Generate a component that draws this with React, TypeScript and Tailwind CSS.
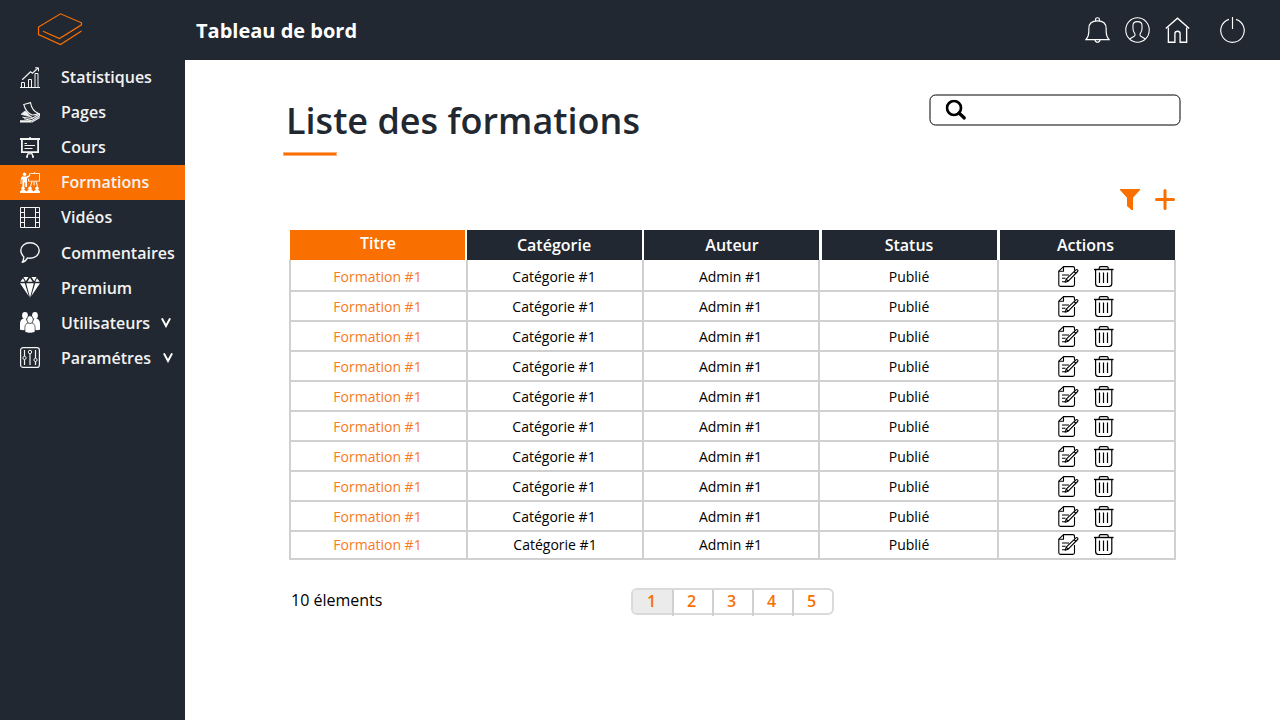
import type { ReactNode } from "react";

const W = "#f4f4f4";

function StatsIcon() {
  return (
    <svg width="20" height="21" viewBox="0 0 20 21" fill="none" stroke={W}>
      <path d="M0 20.5h20" strokeWidth="1" />
      <path d="M1.500 20v-4.500h3V20M8.500 20v-7.500h3V20M15 20V6.500h3V20" strokeWidth="1" />
      <path d="M2.200 12.800L10.500 4.800l2 1.500L18 1" strokeWidth="1.200" />
      <path d="M15 .8h3.500v3.500" strokeWidth="1" />
    </svg>
  );
}

function PagesIcon() {
  return (
    <svg width="20" height="21" viewBox="0 0 20 21" fill="none" stroke={W}>
      <path d="M3.800 2.500L10.500.6c.8 4.800 3 9 8 10.900-2 1-4 1.500-6.300 1.500C8 11.500 5 7 3.800 2.500z" strokeWidth="1.100" />
      <path d="M4.500 9.300L1 12.300l4.500 1.200 7 2-3.500-2.500-3-3.700z" fill={W} strokeWidth=".6" />
      <path d="M2.500 15.300l9.500 1.200 7.500-4.500v1.800l-7.500 4.700-8-1.700M12 20l7.700-4.500" strokeWidth="1.100" />
      <path d="M0 18.300h11l1 2.300H0z" fill={W} stroke="none" />
    </svg>
  );
}

function CoursIcon() {
  return (
    <svg width="20" height="21" viewBox="0 0 20 21" fill="none" stroke={W}>
      <path d="M10 0v1.500" strokeWidth="1.500" />
      <path d="M0 2h20" strokeWidth="2" />
      <path d="M1.900 3v12.200h16.200V3" strokeWidth="1.800" />
      <path d="M4.500 6.500H7M4.500 8.500h10.500M4.500 11.500h8" strokeWidth="1.200" />
      <path d="M8.500 16l-2 4.200M11.500 16l2 4.200M10 16v1.500M6 20h2M12 20h2" strokeWidth="1.500" />
    </svg>
  );
}

function FormationsIcon() {
  return (
    <svg width="20" height="21" viewBox="0 0 20 21" fill="none" stroke="#fff">
      <circle cx="4.500" cy="2.300" r="1.700" fill="#fff" stroke="none" />
      <path d="M1 5.500L2 4.500h4.500L10 2.800l.4.900L7 6.300V15H5.300v-4.500h-1V15H2.400V6.800L1.400 8v4H.5z" fill="#fff" stroke="none" />
      <path d="M9.500 3V1.500h10v7.700h-11V6.500M14.500 0v1.500" strokeWidth=".8" />
      <path d="M12 9.500l-1.500 5M16 9.500l1.500 5M14 9.500v4" strokeWidth="1" />
      <g fill="#fff" stroke="none">
        <circle cx="3" cy="16.200" r="1.700" />
        <circle cx="10" cy="16.200" r="1.700" />
        <circle cx="17" cy="16.200" r="1.700" />
        <path d="M0 21v-1.500l2-2h2l2.500 2 2-2h3l2 2 2.500-2h2l2 2V21z" />
      </g>
    </svg>
  );
}

function VideosIcon() {
  return (
    <svg width="20" height="21" viewBox="0 0 20 21" fill="none" stroke={W} strokeWidth="1">
      <path d="M.5.5h19v20H.5zM4.500.5v20M15.500.5v20M4.500 10.500h11" />
      <path d="M.5 5.500h4M.5 10.500h4M.5 15.500h4M15.500 5.500h4M15.500 10.500h4M15.500 15.500h4" />
    </svg>
  );
}

function CommentIcon() {
  return (
    <svg width="20" height="21" viewBox="0 0 20 21" fill="none" stroke={W} strokeWidth="1.400" strokeLinejoin="round">
      <path d="M10 .8c5.200 0 9.200 3.200 9.200 7.700s-4 7.700-9.200 7.700c-1 0-1.700-.1-2.500-.3-1.200 2.300-3 3.900-5.300 4.400 1-1.500 1.700-3 1.600-5.600C1.900 13.100.8 11 .8 8.500.8 4 4.800.8 10 .8z" />
    </svg>
  );
}

function PremiumIcon() {
  return (
    <svg width="20" height="21" viewBox="0 0 20 21" fill="#fff">
      <path d="M3.500 0h5L5.800 4.300 4.300 1.500zM16.500 0h-5l2.700 4.300 1.500-2.800zM10 .8l2.600 4H7.400zM3 1.200l1.800 3.600H.3zM17 1.200l-1.800 3.600h4.500z" />
      <path d="M0 6.200h4.800l4 13zM20 6.200h-4.800l-4 13zM6.200 6.200h7.600L10 20.800z" />
    </svg>
  );
}

function UsersIcon() {
  return (
    <svg width="20" height="21" viewBox="0 0 20 21" fill="#fff">
      <ellipse cx="5" cy="3.500" rx="2.900" ry="3.400" />
      <ellipse cx="15" cy="3.500" rx="2.900" ry="3.400" />
      <path d="M0 17.500v-6C0 8.500 1.800 6.800 3.500 6.500l2.300.3L8 11l-2.300 7C2.500 18.300.5 18.200 0 17.500zM20 17.500v-6c0-3-1.800-4.700-3.500-5l-2.300.3L12 11l2.300 7c3.200.3 5.200.2 5.700-.5z" />
      <g stroke="#222831" strokeWidth=".7">
        <path d="M4.900 19.600v-4c0-2.800 1.700-4.500 3.300-4.700h3.600c1.600.2 3.300 1.900 3.300 4.700v4c-1.600 2-8.600 2-10.200 0z" />
        <ellipse cx="10" cy="7.600" rx="3.200" ry="3.900" />
      </g>
    </svg>
  );
}

function SettingsIcon() {
  return (
    <svg width="20" height="21" viewBox="0 0 20 21" fill="none" stroke={W} strokeWidth="1">
      <rect x=".6" y=".6" width="18.800" height="19.800" rx="2.500" strokeWidth="1.200" />
      <path d="M4.500 3v6.300M4.500 12.500V18M10 6.700V18M15.500 3v8M15.500 14.500V18" strokeWidth="1.200" />
      <circle cx="4.500" cy="10.900" r="1.600" />
      <circle cx="10" cy="5" r="1.700" />
      <circle cx="15.500" cy="12.900" r="1.600" />
    </svg>
  );
}

function Chevron() {
  return (
    <svg width="10" height="10" viewBox="0 0 10 10" fill="none" stroke="#fff" strokeWidth="2">
      <path d="M.9.400L5 8 9.100.400" />
    </svg>
  );
}

function EditIcon() {
  return (
    <svg width="21" height="21" viewBox="0 0 21 21" fill="none" stroke="#000" strokeWidth="1.100" strokeLinejoin="round">
      <path d="M16.500 4.500V2.200Q16.500.6 14.900.6H5.500L.8 5.200v13.600q0 1.600 1.600 1.600h12.500q1.600 0 1.600-1.600V11" />
      <path d="M5.500.6v4.600H.8" />
      <path d="M4 9h7M4 12.300h3.500M4 15.700h3" />
      <path d="M8.200 13.200l9.700-9.400q.8-.7 1.600.1t.1 1.600l-9.400 9.700-3 1.100zM8.200 13.200l2 2M16 5.700l2 2" />
    </svg>
  );
}

function TrashIcon() {
  return (
    <svg width="20" height="21" viewBox="0 0 20 21" fill="none" stroke="#000" strokeWidth="1.200" strokeLinejoin="round">
      <path d="M0 3.500h19.500" strokeWidth="1.400" />
      <path d="M5.200 3V2Q5.200.6 6.700.6h6q1.500 0 1.500 1.400v1" />
      <path d="M1.600 4v13.500q0 3 3 3h10.200q3 0 3-3V4" />
      <path d="M5.500 6.500V17M9.500 6.500V17M13.500 6.500V17" strokeWidth="1.200" />
    </svg>
  );
}

type Item = { label: string; icon: ReactNode; nudge: string; active?: boolean; arrow?: string };

const items: Item[] = [
  { label: "Statistiques", icon: <StatsIcon />, nudge: "pb-0.5" },
  { label: "Pages", icon: <PagesIcon />, nudge: "pb-0.5" },
  { label: "Cours", icon: <CoursIcon />, nudge: "pb-0.5" },
  { label: "Formations", icon: <FormationsIcon />, nudge: "pb-0.5", active: true },
  { label: "Vidéos", icon: <VideosIcon />, nudge: "pb-0.5" },
  { label: "Commentaires", icon: <CommentIcon />, nudge: "" },
  { label: "Premium", icon: <PremiumIcon />, nudge: "" },
  { label: "Utilisateurs", icon: <UsersIcon />, nudge: "", arrow: "ml-[11px]" },
  { label: "Paramétres", icon: <SettingsIcon />, nudge: "", arrow: "ml-3" },
];

const cols = "grid grid-cols-[177px_176px_176px_179px_177px]";

function Row({ first, last }: { first: boolean; last: boolean }) {
  const h = first ? "h-8 pt-1" : last ? "h-7" : "h-[30px] pt-0.5";
  const cell = `flex items-center justify-center border-r-2 border-b-2 border-[#d0d0d0] ${h}`;
  return (
    <div className={`${cols} w-[887px] border-l-2 border-[#d0d0d0] text-sm leading-5 text-black`}>
      <div className={`${cell} pr-0.5 text-[#f87a1c]`}>Formation #1</div>
      <div className={`${cell} ${last ? "" : "pr-0.5"}`}>Catégorie #1</div>
      <div className={`${cell} pr-px`}>Admin #1</div>
      <div className={`${cell} pl-px`}>Publié</div>
      <div className={`${cell} gap-[15px] pr-0.5 pb-0.5`}>
        <EditIcon />
        <TrashIcon />
      </div>
    </div>
  );
}

export default function App() {
  return (
    <div className="flex h-[720px] w-[1280px] flex-col overflow-hidden bg-white font-['Open_Sans',sans-serif]">
      <header className="flex h-[60px] shrink-0 items-center bg-[#222831]">
        <div className="w-[196px] pl-[37px]">
          <svg width="46" height="34" viewBox="0 0 46 34" fill="none" stroke="#fa7000" strokeWidth="1.200">
            <path d="M44.500 18L23.500 31.500 1.500 21.500v-7.500L23.500 .8l21 9v2L22.500 25.500 6 18.200" />
          </svg>
        </div>
        <div className="pt-px text-xl font-bold text-white">Tableau de bord</div>
        <div className="ml-auto flex items-center pr-[35px]">
          <svg className="mr-[15px]" width="25" height="26" viewBox="0 0 26 27" fill="none" stroke="#fff" strokeWidth="1.200">
            <path d="M1 23.500q3-3.500 3-8.500v-3q0-8 9-8t9 8v3q0 5 3 8.500z" />
            <path d="M11 4.200V2.500Q11 .8 13 .8t2 1.700v1.700M10.300 23.500q.4 2.700 2.700 2.700t2.700-2.700" />
          </svg>
          <svg className="mr-[15px]" width="25" height="26" viewBox="0 0 26 27" fill="none" stroke="#fff" strokeWidth="1.100">
            <ellipse cx="13" cy="13.500" rx="12.200" ry="12.800" />
            <path d="M4.800 22.800L9.500 20q1.500-1 .8-2.500Q8.300 15 8.300 12V8.500Q8.500 4.800 13 4.800t4.700 3.700V12q0 3-2 5.500-.7 1.500.8 2.500l4.700 2.800" />
          </svg>
          <svg className="mr-[30px]" width="25" height="26" viewBox="0 0 26 27" fill="none" stroke="#fff" strokeWidth="1.400">
            <path d="M.8 12L13 1.200 25.200 12" />
            <path d="M3.500 11v15.200h6.800V17q.2-2.200 2.700-2.200t2.700 2.200v9.200h6.800V11" />
          </svg>
          <svg width="25" height="26" viewBox="0 0 26 27" fill="none" stroke="#fff" strokeWidth="1.200">
            <path d="M13 0v12.500M9.300 2.500A12.200 12.200 0 1 0 16.700 2.500" />
          </svg>
        </div>
      </header>

      <div className="flex flex-1">
        <nav className="w-[185px] shrink-0 bg-[#222831]">
          {items.map((it) => (
            <div
              key={it.label}
              className={`flex h-[35px] items-center pl-5 font-semibold text-[#f2f2f2] ${it.active ? "bg-[#fa7000]" : ""}`}
            >
              <div className="w-[41px]">{it.icon}</div>
              <span className={`whitespace-nowrap ${it.nudge}`}>{it.label}</span>
              {it.arrow && (
                <span className={it.arrow}>
                  <Chevron />
                </span>
              )}
            </div>
          ))}
        </nav>

        <main className="flex-1 pl-[98px]">
          <div className="flex h-[104px] justify-between pr-[99px]">
            <div className="pt-[34px]">
              <h1 className="pl-[3px] text-4xl leading-[54px] font-semibold text-[#222831]">Liste des formations</h1>
              <div className="mt-1 h-1 w-[54px] border border-[#fcb077] bg-[#fa7000]" />
            </div>
            <div className="mt-[34px] h-8 w-[252px]">
              <div className="flex h-[31px] w-[251px] translate-x-[0.5px] translate-y-[0.5px] items-center rounded-md border border-black pl-[14.5px]">
                <svg width="21" height="21" viewBox="0 0 21 21" fill="none" stroke="#000">
                  <circle cx="8.500" cy="8.500" r="7" strokeWidth="2.700" />
                  <path d="M13.500 13.500l5.300 5" strokeWidth="3.200" strokeLinecap="round" />
                </svg>
              </div>
            </div>
          </div>

          <div className="flex h-[66px] justify-end gap-[15px] pt-[25px] pr-[105px]">
            <svg width="20" height="21" viewBox="0 0 20 21" fill="#fa7000">
              <path d="M0 0h20v1l-7 7.700V21h-1.500L7 17V8.700L0 1z" />
            </svg>
            <svg width="20" height="21" viewBox="0 0 20 21" stroke="#fa7000" strokeWidth="3" strokeLinecap="round">
              <path d="M10 1.500v18M1.500 10.500h17" />
            </svg>
          </div>

          <div className="ml-1.5 w-[887px]">
            <div className="flex h-[30px] pl-px text-base leading-[30px] font-semibold text-white">
              <div className="mr-0.5 w-[175px] bg-[#fa7000] pl-px text-center leading-[26px]">Titre</div>
              <div className="mr-0.5 w-[175px] bg-[#222831] pr-px text-center">Catégorie</div>
              <div className="mr-[3px] w-[175px] bg-[#222831] pl-px text-center">Auteur</div>
              <div className="mr-[3px] w-[175px] bg-[#222831] pr-px text-center">Status</div>
              <div className="w-[175px] bg-[#222831] pr-1 text-center">Actions</div>
            </div>
            {Array.from({ length: 10 }, (_, i) => (
              <Row key={i} first={i === 0} last={i === 9} />
            ))}
          </div>

          <div className="flex pt-7 pl-2">
            <div className="w-[340px] text-base text-black">10 élements</div>
            <div className="flex h-[27px] w-[203px] rounded-md border-2 border-[#dadada] text-base leading-[23px] font-semibold text-[#fa7000]">
              <div className="h-[26px] w-[41px] border-r-2 border-[#d0d0d0] text-center">
                <div className="h-[23px] rounded-l bg-[#ebebeb] pr-0.5">1</div>
              </div>
              <div className="h-[26px] w-10 border-r-2 border-[#d0d0d0] pr-[3px] text-center">2</div>
              <div className="h-[26px] w-10 border-r-2 border-[#d0d0d0] pr-[3px] text-center">3</div>
              <div className="h-[26px] w-10 border-r-2 border-[#d0d0d0] pr-[3px] text-center">4</div>
              <div className="w-[38px] pr-[3px] text-center">5</div>
            </div>
          </div>
        </main>
      </div>
    </div>
  );
}
